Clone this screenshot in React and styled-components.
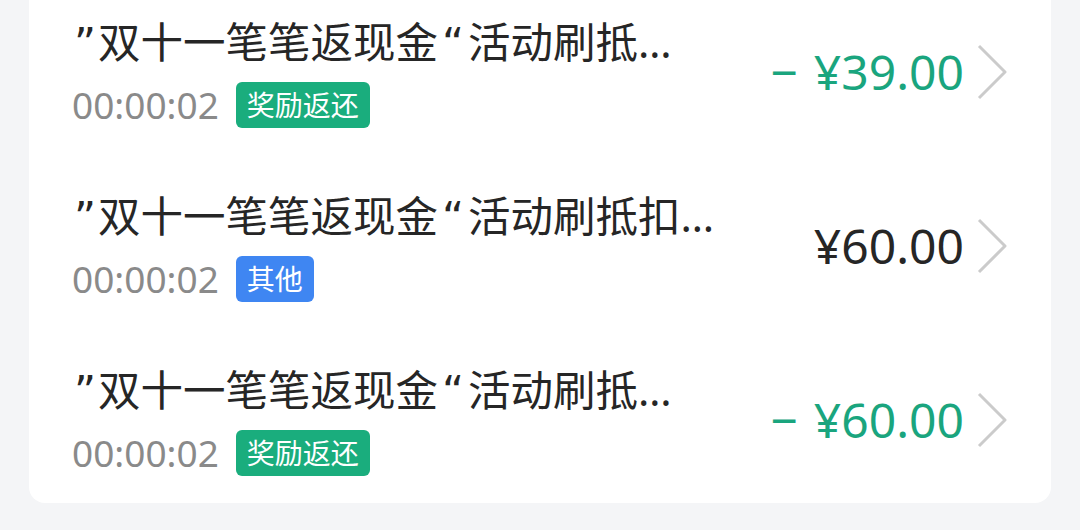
import React from 'react';
import styled, {createGlobalStyle} from 'styled-components';

const records = [
  {id: 1, time: '00:00:02', tag: '奖励返还', kind: 'reward', amount: '¥39.00'},
  {id: 2, time: '00:00:02', tag: '其他', kind: 'other', amount: '¥60.00'},
  {id: 3, time: '00:00:02', tag: '奖励返还', kind: 'reward', amount: '¥60.00'},
];

export default function App() {
  return (
    <>
      <GlobalStyle />
      <Page>
        <Card>
          {records.map((item) => (
            <Row key={item.id}>
              <Info>
                <Title>
                  <Quote pad={2}>”</Quote>双十一笔笔返现金<Quote pad={4}>“</Quote>活动刷抵扣返现
                </Title>
                <Meta>
                  <Time>{item.time}</Time>
                  <Tag kind={item.kind}>{item.tag}</Tag>
                </Meta>
              </Info>
              <Amount kind={item.kind}>
                {item.kind === 'reward' && <Sign>−</Sign>}
                {item.amount}
              </Amount>
              <Chevron viewBox="0 0 30 56">
                <polyline
                  points="2,2 28,28 2,54"
                  fill="none"
                  stroke="#cbcbcb"
                  strokeWidth="3"
                  strokeLinejoin="round"
                />
              </Chevron>
            </Row>
          ))}
        </Card>
      </Page>
    </>
  );
}

const GlobalStyle = createGlobalStyle`
  body {
    margin: 0;
    background: #f4f5f7;
    font-family: "Noto Sans", "Noto Sans CJK SC", sans-serif;
    overflow: hidden;
  }
`;

const Page = styled.div`
  padding: 0 29px;
`;

const Card = styled.div`
  margin-top: -19px;
  background: #ffffff;
  border-radius: 16px;
`;

const Row = styled.div`
  box-sizing: border-box;
  height: 174px;
  padding: 7px 44px 0 43px;
  display: flex;
  align-items: center;
`;

const Info = styled.div`
  flex: 1;
  min-width: 0;
  margin-right: 90px;
`;

const Title = styled.div`
  font-size: 42.5px;
  line-height: 52px;
  color: #262626;
  white-space: nowrap;
  overflow: hidden;
  text-overflow: ellipsis;
  margin-bottom: 12px;
`;

const Quote = styled.span`
  font-family: "DejaVu Sans", sans-serif;
  padding: 0 ${(p) => p.pad}px;
`;

const Meta = styled.div`
  display: flex;
  align-items: center;
  gap: 17px;
`;

const Time = styled.span`
  font-size: 37px;
  line-height: 46px;
  color: #8a8a8a;
`;

const Tag = styled.span`
  height: 46px;
  line-height: 46px;
  padding: 0 11px;
  border-radius: 6px;
  font-size: 28px;
  color: #ffffff;
  background: ${(p) => (p.kind === 'reward' ? '#1aad7d' : '#3f86f2')};
`;

const Amount = styled.div`
  font-size: 48px;
  white-space: nowrap;
  color: ${(p) => (p.kind === 'reward' ? '#1aa57e' : '#262626')};
`;

const Sign = styled.span`
  margin-right: 16px;
`;

const Chevron = styled.svg`
  width: 30px;
  height: 56px;
  margin-left: 13px;
  flex-shrink: 0;
`;
